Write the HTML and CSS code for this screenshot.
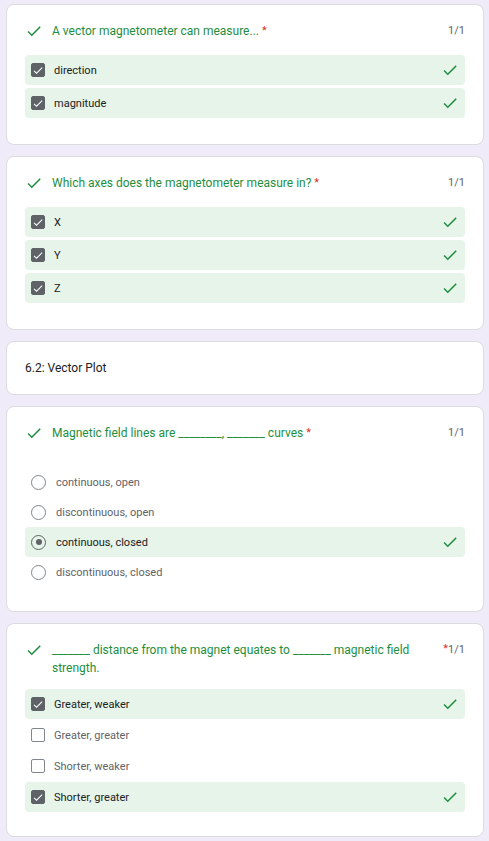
FILE: index.html
```html
<!DOCTYPE html>
<html lang="en">
<head>
<meta charset="utf-8">
<title>Quiz results</title>
<link rel="stylesheet" href="styles.css">
</head>
<body>
<main class="page">

  <section class="card">
    <div class="q-head">
      <svg class="q-ok" viewBox="0 0 24 24"><path d="M9 16.17L4.83 12l-1.42 1.41L9 19 21 7l-1.41-1.41z"/></svg>
      <div class="q-title">A vector magnetometer can measure... <span class="req">*</span></div>
      <div class="q-score">1/1</div>
    </div>
    <div class="opts opts-check">
      <div class="opt correct">
        <span class="box checked"><svg viewBox="0 0 24 24"><path d="M9 16.17L4.83 12l-1.42 1.41L9 19 21 7l-1.41-1.41z"/></svg></span>
        <span class="opt-label">direction</span>
        <svg class="opt-ok" viewBox="0 0 24 24"><path d="M9 16.17L4.83 12l-1.42 1.41L9 19 21 7l-1.41-1.41z"/></svg>
      </div>
      <div class="opt correct">
        <span class="box checked"><svg viewBox="0 0 24 24"><path d="M9 16.17L4.83 12l-1.42 1.41L9 19 21 7l-1.41-1.41z"/></svg></span>
        <span class="opt-label">magnitude</span>
        <svg class="opt-ok" viewBox="0 0 24 24"><path d="M9 16.17L4.83 12l-1.42 1.41L9 19 21 7l-1.41-1.41z"/></svg>
      </div>
    </div>
  </section>

  <section class="card">
    <div class="q-head">
      <svg class="q-ok" viewBox="0 0 24 24"><path d="M9 16.17L4.83 12l-1.42 1.41L9 19 21 7l-1.41-1.41z"/></svg>
      <div class="q-title">Which axes does the magnetometer measure in? <span class="req">*</span></div>
      <div class="q-score">1/1</div>
    </div>
    <div class="opts opts-check">
      <div class="opt correct">
        <span class="box checked"><svg viewBox="0 0 24 24"><path d="M9 16.17L4.83 12l-1.42 1.41L9 19 21 7l-1.41-1.41z"/></svg></span>
        <span class="opt-label">X</span>
        <svg class="opt-ok" viewBox="0 0 24 24"><path d="M9 16.17L4.83 12l-1.42 1.41L9 19 21 7l-1.41-1.41z"/></svg>
      </div>
      <div class="opt correct">
        <span class="box checked"><svg viewBox="0 0 24 24"><path d="M9 16.17L4.83 12l-1.42 1.41L9 19 21 7l-1.41-1.41z"/></svg></span>
        <span class="opt-label">Y</span>
        <svg class="opt-ok" viewBox="0 0 24 24"><path d="M9 16.17L4.83 12l-1.42 1.41L9 19 21 7l-1.41-1.41z"/></svg>
      </div>
      <div class="opt correct">
        <span class="box checked"><svg viewBox="0 0 24 24"><path d="M9 16.17L4.83 12l-1.42 1.41L9 19 21 7l-1.41-1.41z"/></svg></span>
        <span class="opt-label">Z</span>
        <svg class="opt-ok" viewBox="0 0 24 24"><path d="M9 16.17L4.83 12l-1.42 1.41L9 19 21 7l-1.41-1.41z"/></svg>
      </div>
    </div>
  </section>

  <section class="card section-card">
    <div class="section-title">6.2: Vector Plot</div>
  </section>

  <section class="card">
    <div class="q-head">
      <svg class="q-ok" viewBox="0 0 24 24"><path d="M9 16.17L4.83 12l-1.42 1.41L9 19 21 7l-1.41-1.41z"/></svg>
      <div class="q-title">Magnetic field lines are ________, _______ curves <span class="req">*</span></div>
      <div class="q-score">1/1</div>
    </div>
    <div class="opts opts-radio">
      <div class="opt">
        <span class="radio"></span>
        <span class="opt-label">continuous, open</span>
      </div>
      <div class="opt">
        <span class="radio"></span>
        <span class="opt-label">discontinuous, open</span>
      </div>
      <div class="opt correct">
        <span class="radio checked"></span>
        <span class="opt-label">continuous, closed</span>
        <svg class="opt-ok" viewBox="0 0 24 24"><path d="M9 16.17L4.83 12l-1.42 1.41L9 19 21 7l-1.41-1.41z"/></svg>
      </div>
      <div class="opt">
        <span class="radio"></span>
        <span class="opt-label">discontinuous, closed</span>
      </div>
    </div>
  </section>

  <section class="card">
    <div class="q-head">
      <svg class="q-ok" viewBox="0 0 24 24"><path d="M9 16.17L4.83 12l-1.42 1.41L9 19 21 7l-1.41-1.41z"/></svg>
      <div class="q-title">_______ distance from the magnet equates to _______ magnetic field strength.</div>
      <div class="q-score"><span class="req">*</span>1/1</div>
    </div>
    <div class="opts opts-multi">
      <div class="opt correct">
        <span class="box checked"><svg viewBox="0 0 24 24"><path d="M9 16.17L4.83 12l-1.42 1.41L9 19 21 7l-1.41-1.41z"/></svg></span>
        <span class="opt-label">Greater, weaker</span>
        <svg class="opt-ok" viewBox="0 0 24 24"><path d="M9 16.17L4.83 12l-1.42 1.41L9 19 21 7l-1.41-1.41z"/></svg>
      </div>
      <div class="opt">
        <span class="box"></span>
        <span class="opt-label">Greater, greater</span>
      </div>
      <div class="opt">
        <span class="box"></span>
        <span class="opt-label">Shorter, weaker</span>
      </div>
      <div class="opt correct">
        <span class="box checked"><svg viewBox="0 0 24 24"><path d="M9 16.17L4.83 12l-1.42 1.41L9 19 21 7l-1.41-1.41z"/></svg></span>
        <span class="opt-label">Shorter, greater</span>
        <svg class="opt-ok" viewBox="0 0 24 24"><path d="M9 16.17L4.83 12l-1.42 1.41L9 19 21 7l-1.41-1.41z"/></svg>
      </div>
    </div>
  </section>

</main>
</body>
</html>
```

FILE: styles.css
```css
* { box-sizing: border-box; }

html, body {
  margin: 0;
  padding: 0;
  background: #f0ebf8;
}

body {
  font-family: Roboto, "Liberation Sans", Arial, sans-serif;
  color: #202124;
}

.page {
  width: 478px;
  margin-left: 6px;
  padding-top: 4px;
  display: flex;
  flex-direction: column;
  gap: 11px;
}

.card {
  background: #fff;
  border: 1px solid #dadce0;
  border-radius: 8px;
  padding: 17px 18px 26px;
}

.section-card {
  padding: 17px 18px 17px;
}

.section-title {
  font-size: 12px;
  line-height: 18px;
  height: 18px;
  color: #202124;
}

.q-head {
  display: flex;
  align-items: flex-start;
}

.q-ok {
  width: 18px;
  height: 18px;
  flex: none;
  fill: #1e8e3e;
  margin-right: 9px;
}

.q-title {
  flex: 1;
  font-size: 12px;
  line-height: 18px;
  color: #1e8e3e;
}

.req {
  color: #d93025;
  font-size: 11px;
  line-height: 0;
  vertical-align: 1px;
}

.q-score {
  flex: none;
  margin-left: 24px;
  font-size: 11px;
  line-height: 18px;
  height: 18px;
  color: #5f6368;
}

.opts {
  display: flex;
  flex-direction: column;
}

.opts-check { margin-top: 15px; gap: 3px; }
.opts-radio { margin-top: 25px; gap: 0; margin-bottom: -2px; }
.opts-multi { margin-top: 12px; gap: 1px; margin-bottom: -2px; }

.opt {
  height: 30px;
  display: flex;
  align-items: center;
  padding: 0 6px;
  border-radius: 4px;
  font-size: 11px;
  color: #5f6368;
}

.opt.correct {
  background: #e6f4ea;
  color: #202124;
}

.opt-label {
  flex: 1;
}

.box {
  width: 14px;
  height: 14px;
  flex: none;
  border: 1.5px solid #80868b;
  border-radius: 2px;
  margin-right: 9px;
  display: flex;
  align-items: center;
  justify-content: center;
}

.box.checked {
  background: #5f6368;
  border-color: #5f6368;
}

.box svg {
  width: 13px;
  height: 13px;
  fill: #fff;
}

.radio {
  width: 15px;
  height: 15px;
  flex: none;
  border: 1.5px solid #80868b;
  border-radius: 50%;
  margin-right: 10px;
  display: flex;
  align-items: center;
  justify-content: center;
}

.radio.checked {
  border-color: #5f6368;
}

.radio.checked::after {
  content: "";
  width: 6px;
  height: 6px;
  border-radius: 50%;
  background: #5f6368;
}

.opt-ok {
  width: 18px;
  height: 18px;
  flex: none;
  fill: #1e8e3e;
}
```
